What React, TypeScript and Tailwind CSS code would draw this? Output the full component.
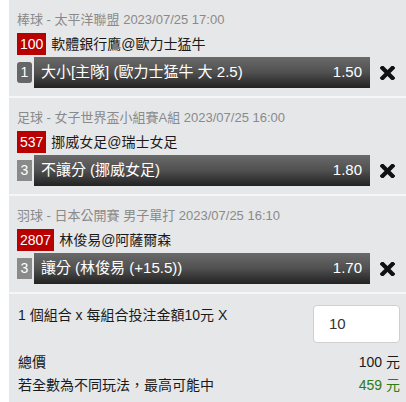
const bets = [
  {
    header: '棒球 - 太平洋聯盟 2023/07/25 17:00',
    code: '100',
    match: '軟體銀行鷹@歐力士猛牛',
    num: '1',
    rounded: true,
    pick: '大小[主隊] (歐力士猛牛 大 2.5)',
    odds: '1.50',
  },
  {
    header: '足球 - 女子世界盃小組賽A組 2023/07/25 16:00',
    code: '537',
    match: '挪威女足@瑞士女足',
    num: '3',
    rounded: false,
    pick: '不讓分 (挪威女足)',
    odds: '1.80',
  },
  {
    header: '羽球 - 日本公開賽 男子單打 2023/07/25 16:10',
    code: '2807',
    match: '林俊易@阿薩爾森',
    num: '3',
    rounded: false,
    pick: '讓分 (林俊易 (+15.5))',
    odds: '1.70',
  },
];

function CloseIcon() {
  return (
    <svg width="15" height="14" viewBox="0 0 15 14">
      <path d="M2.5 2 L12.5 12 M12.5 2 L2.5 12" stroke="#111" strokeWidth="4.2" strokeLinecap="square" />
    </svg>
  );
}

export default function App() {
  return (
    <div
      className="w-[406px] h-[402px] bg-white pl-[9px] overflow-hidden"
      style={{ fontFamily: '"Liberation Sans", "Noto Sans CJK TC", sans-serif' }}
    >
      <div className="bg-[#e6e7e9] h-full">
        {bets.map((b, i) => (
          <div key={i} className="border-b-2 border-[#f6f6f6] pt-[10px] pb-[8px] pl-[8px] pr-[11px]">
            <div className="h-[20px] leading-[20px] text-[13px] text-[#8a8a8a] whitespace-nowrap">{b.header}</div>
            <div className="mt-[3px] h-[22px] flex items-center gap-[5px]">
              <span className="h-[22px] leading-[22px] px-[3px] bg-[#b80000] text-white text-[14px]">{b.code}</span>
              <span className="text-[14px] text-[#1a1a1a]">{b.match}</span>
            </div>
            <div className="mt-[2px] h-[31px] flex items-center">
              <span
                className={`w-[15px] h-[21px] leading-[21px] text-center text-white text-[14px] ${
                  b.rounded ? 'bg-[#666666] rounded-[3px]' : 'bg-[#8a8a8a]'
                }`}
              >
                {b.num}
              </span>
              <div className="ml-[2px] w-[337px] h-[31px] flex items-center justify-between px-[7px] pr-[8px] bg-gradient-to-b from-[#6a6a6a] via-[#505050] to-[#222222] text-white text-[15px]">
                <span className="whitespace-nowrap">{b.pick}</span>
                <span>{b.odds}</span>
              </div>
              <div className="ml-[10px] flex items-center">
                <CloseIcon />
              </div>
            </div>
          </div>
        ))}
        <div className="pt-[11px] pl-[9px] pr-[6px] text-[14px] text-[#1a1a1a]">
          <div className="flex justify-between">
            <span>1 個組合 x 每組合投注金額10元 X</span>
            <div className="w-[87px] h-[38px] bg-white border border-[#cfcfcf] rounded-[4px] flex items-center pl-[15px] text-[15px] text-[#333]">
              10
            </div>
          </div>
          <div className="mt-[8px] flex justify-between h-[23px] leading-[23px]">
            <span>總價</span>
            <span>100 元</span>
          </div>
          <div className="flex justify-between h-[23px] leading-[23px]">
            <span>若全數為不同玩法，最高可能中</span>
            <span className="text-[#2f7a12]">459 元</span>
          </div>
        </div>
      </div>
    </div>
  );
}
